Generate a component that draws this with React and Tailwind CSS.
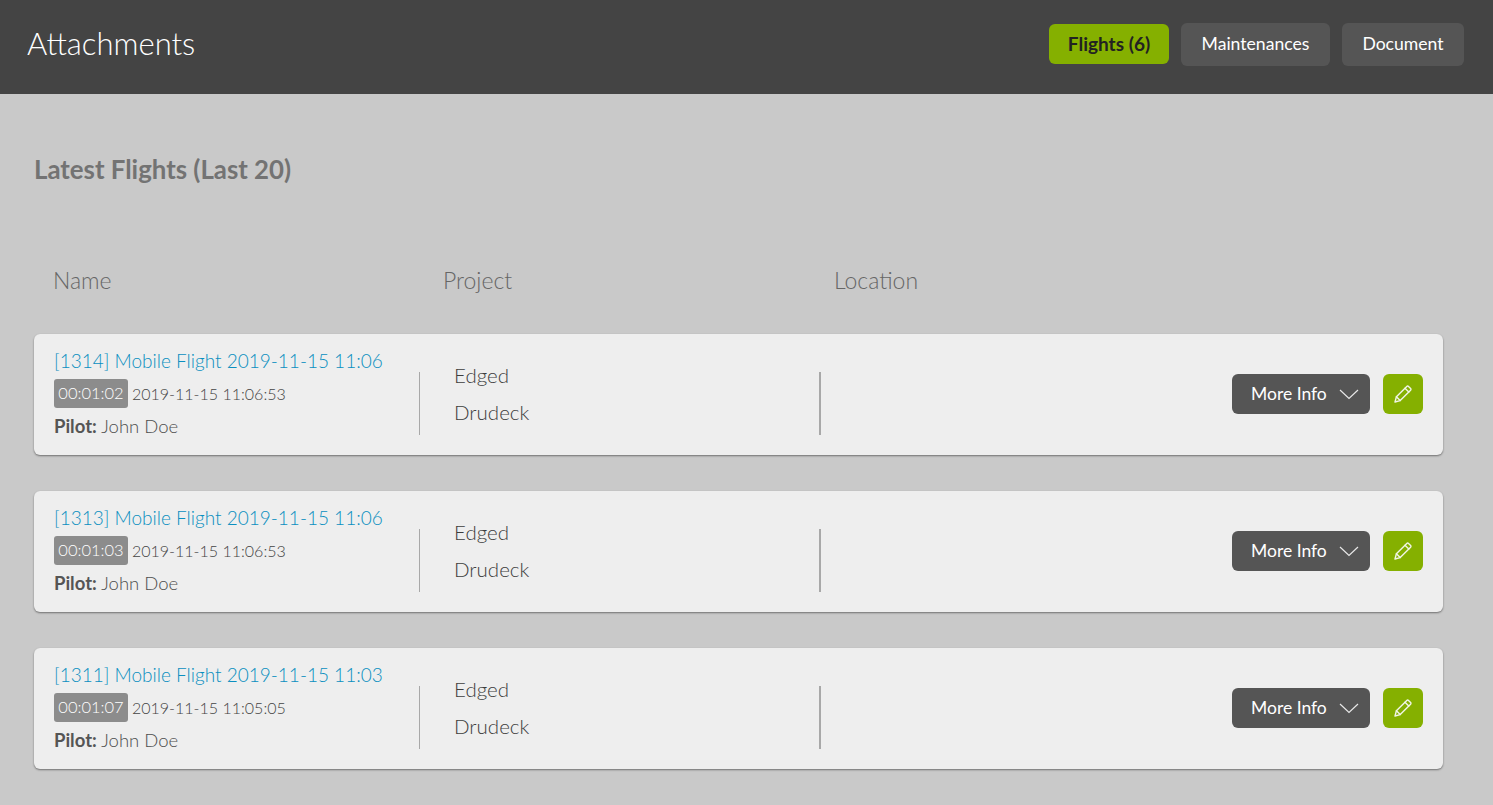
import React from 'react';

const flights = [
  { id: 1314, title: 'Mobile Flight 2019-11-15 11:06', duration: '00:01:02', date: '2019-11-15 11:06:53' },
  { id: 1313, title: 'Mobile Flight 2019-11-15 11:06', duration: '00:01:03', date: '2019-11-15 11:06:53' },
  { id: 1311, title: 'Mobile Flight 2019-11-15 11:03', duration: '00:01:07', date: '2019-11-15 11:05:05' },
];

function PencilIcon() {
  return (
    <svg width="20" height="20" viewBox="0 0 20 20" fill="none" stroke="#f1f5e6" strokeWidth="1.4" strokeLinejoin="round" strokeLinecap="round">
      <path d="M2 18l1.4-5.2L13.8 2.4a1.2 1.2 0 0 1 1.7 0l2.1 2.1a1.2 1.2 0 0 1 0 1.7L7.2 16.6 2 18z" />
      <path d="M3.4 12.8l3.8 3.8" />
      <path d="M12 4.2l3.8 3.8" />
    </svg>
  );
}

function ChevronIcon() {
  return (
    <svg width="20" height="11" viewBox="0 0 20 11" fill="none" stroke="#e8e8e8" strokeWidth="1.2">
      <path d="M1 1l9 8.5L19 1" />
    </svg>
  );
}

function FlightCard({ flight }) {
  return (
    <div className="flex h-[121px] items-start rounded-md bg-[#eeeeee] shadow-[0_1px_2px_rgba(0,0,0,0.45)]">
      <div className="flex h-full w-[385px] flex-col pl-5 pt-[15px]">
        <a className="text-[19px] leading-[24px] font-light whitespace-nowrap text-[#0a8fc0]">[{flight.id}] {flight.title}</a>
        <div className="mt-[6px] flex h-[29px] items-center">
          <span className="flex h-[29px] w-[74px] items-center justify-center rounded-[3px] bg-[#8c8c8c] text-[16.5px] font-light text-white">{flight.duration}</span>
          <span className="ml-1 text-[16px] font-light text-[#444444]">{flight.date}</span>
        </div>
        <div className="mt-[7px] text-[18.5px] leading-[22px] font-light text-[#4d4d4d]">
          <b className="font-bold text-[#555555]">Pilot:</b> John Doe
        </div>
      </div>
      <div className="mt-[38px] h-[63px] w-px bg-[#a8a8a8]" />
      <div className="mt-[29px] flex w-[399px] flex-col gap-[13px] pl-[34px] text-[20.5px] leading-6 font-light text-[#3d3d3d]">
        <span>Edged</span>
        <span>Drudeck</span>
      </div>
      <div className="mt-[38px] h-[63px] w-[2px] bg-[#a8a8a8]" />
      <div className="mt-10 ml-auto flex items-center gap-[13px] pr-5">
        <button className="flex h-10 w-[138px] items-center justify-between rounded-md bg-[#555555] pl-[19px] pr-[11px] text-[17.5px] text-white">
          More Info
          <ChevronIcon />
        </button>
        <button className="flex h-10 w-10 items-center justify-center rounded-md bg-[#85b000]">
          <PencilIcon />
        </button>
      </div>
    </div>
  );
}

export default function App() {
  return (
    <div className="min-h-screen overflow-hidden bg-[#c9c9c9] font-['Lato',sans-serif]">
      <header className="flex h-[94px] items-center justify-between bg-[#444444] pb-[6px] pl-[27px] pr-[29px]">
        <h1 className="-mt-0.5 text-[31px] font-light text-white">Attachments</h1>
        <div className="flex items-center gap-3">
          <button className="h-10 w-[120px] rounded-md bg-[#85b000] text-[19px] font-bold text-[#222222]">Flights (6)</button>
          <button className="h-[43px] w-[149px] rounded-md bg-[#555555] text-[17.6px] text-white">Maintenances</button>
          <button className="h-[43px] w-[122px] rounded-md bg-[#555555] text-[17.6px] text-white">Document</button>
        </div>
      </header>

      <main className="px-[34px] pr-[50px]">
        <h2 className="mt-[59px] text-[25.8px] leading-8 font-bold text-[#737373]">Latest Flights (Last 20)</h2>
        <div className="mt-[79px] flex pl-[19px] text-[23px] leading-8 font-light text-[#666666]">
          <span className="w-[390px]">Name</span>
          <span className="w-[391px]">Project</span>
          <span>Location</span>
        </div>
        <div className="mt-[38px] flex flex-col gap-9">
          {flights.map((f) => (
            <FlightCard key={f.id} flight={f} />
          ))}
        </div>
      </main>
    </div>
  );
}
